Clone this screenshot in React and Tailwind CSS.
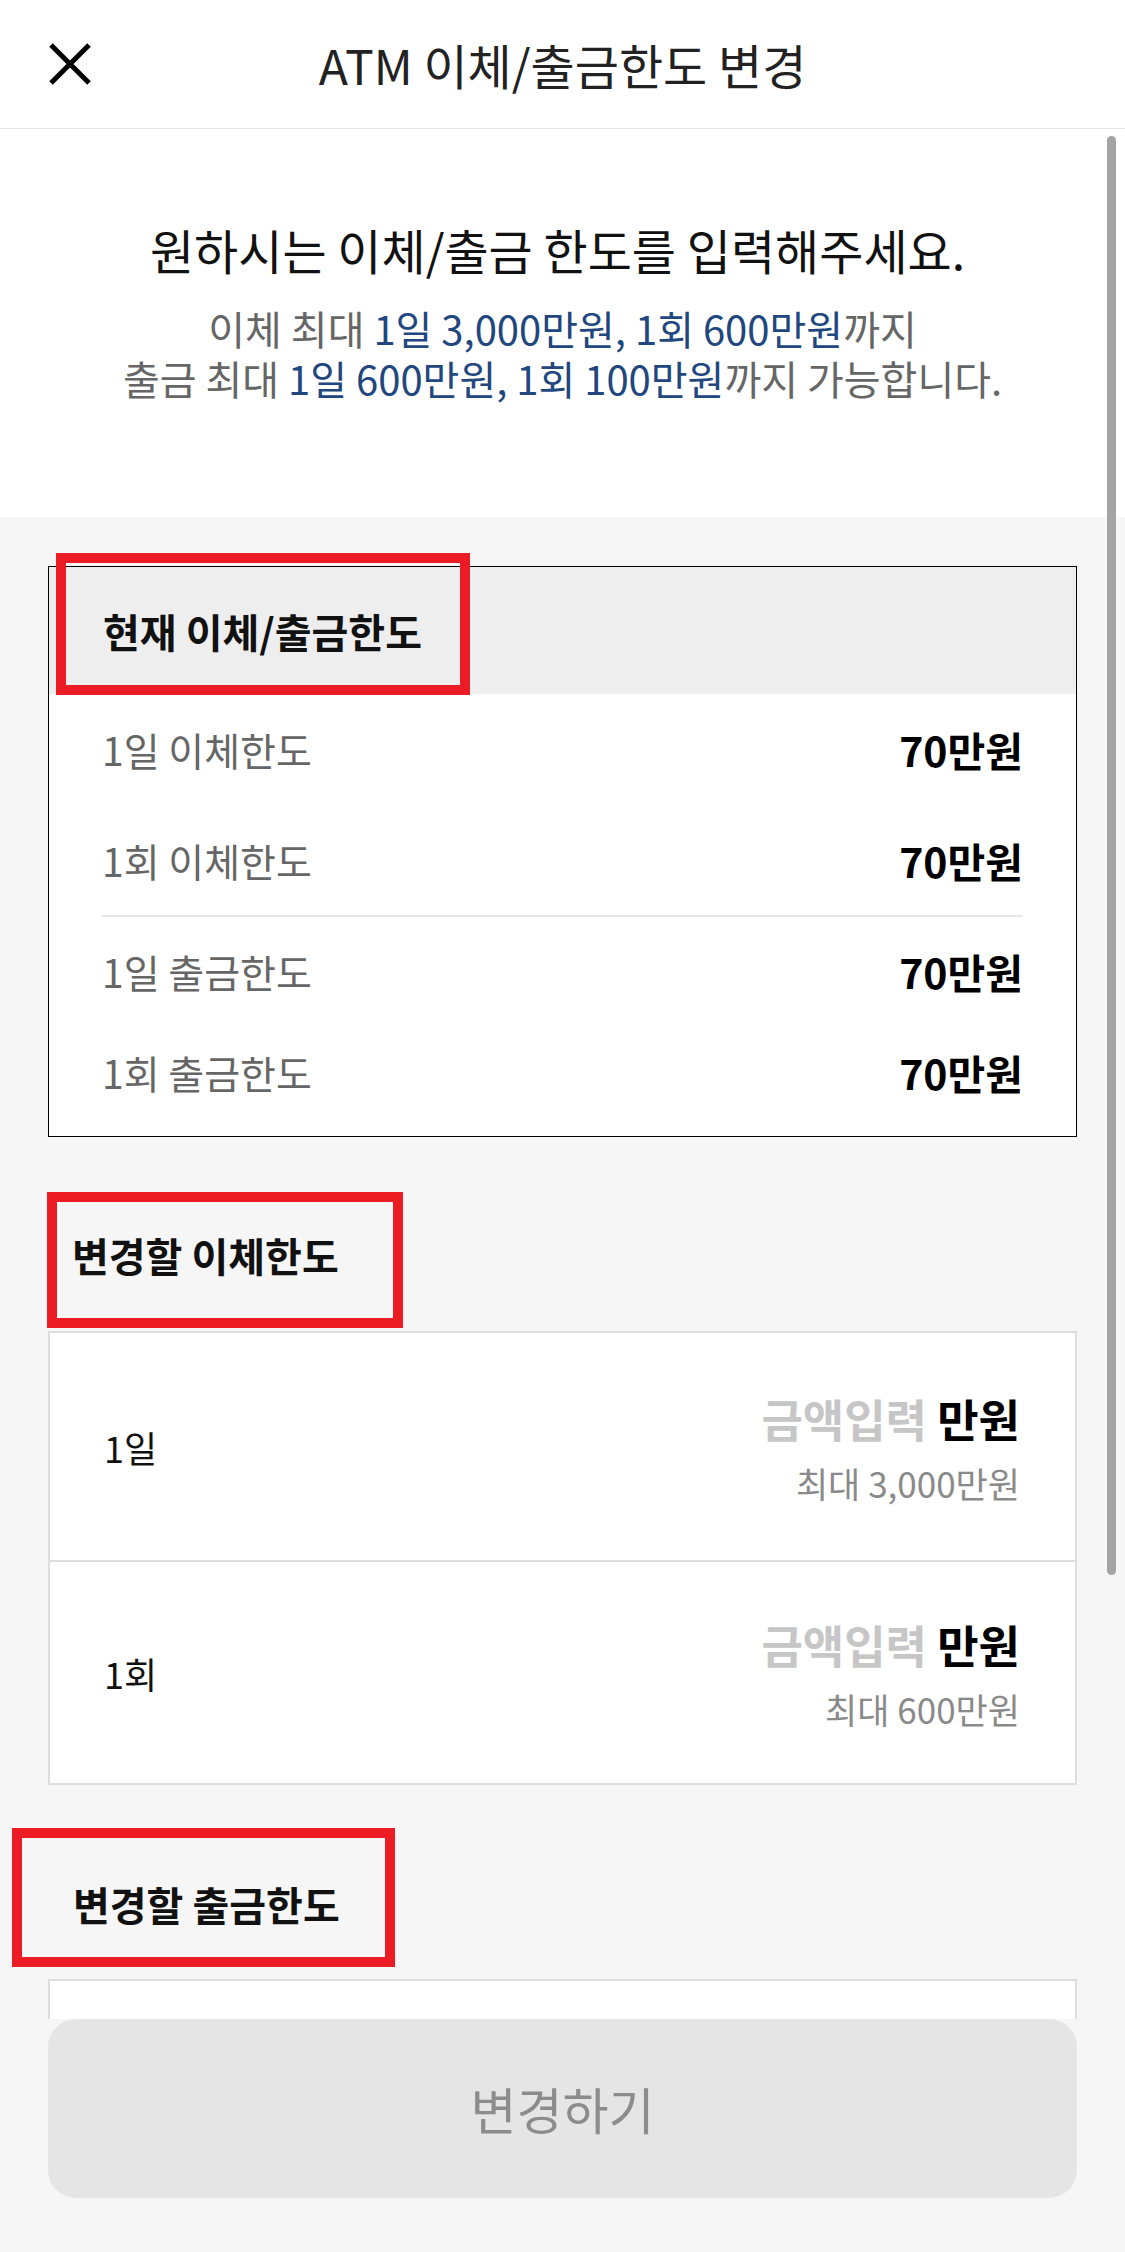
import React from "react";

const limits = [
  [
    { label: "1일 이체한도", value: "70만원" },
    { label: "1회 이체한도", value: "70만원" },
  ],
  [
    { label: "1일 출금한도", value: "70만원" },
    { label: "1회 출금한도", value: "70만원" },
  ],
];

function CloseIcon() {
  return (
    <svg width="44" height="42" viewBox="0 0 44 42" fill="none">
      <path d="M3 2 L41 40 M41 2 L3 40" stroke="#000" strokeWidth="5" />
    </svg>
  );
}

function Header() {
  return (
    <header className="h-[129px] shrink-0 bg-white border-b border-[#e4e4e4] grid grid-cols-[1fr_auto_1fr] items-center px-[48px]">
      <button className="w-[44px] h-[42px] flex items-center justify-center">
        <CloseIcon />
      </button>
      <h1 className="text-[48px] leading-[64px] text-[#222]">ATM 이체/출금한도 변경</h1>
      <div />
    </header>
  );
}

function Intro() {
  return (
    <section className="bg-white pt-[88px] pb-[114px] text-center">
      <h2 className="text-[48px] leading-[64px] text-[#111] pr-[10px]">
        원하시는 이체/출금 한도를 입력해주세요.
      </h2>
      <p className="mt-[22px] text-[40px] leading-[50px] text-[#666]">
        이체 최대 <span className="text-[#22477e]">1일 3,000만원, 1회 600만원</span>까지
        <br />
        출금 최대 <span className="text-[#22477e]">1일 600만원, 1회 100만원</span>까지 가능합니다.
      </p>
    </section>
  );
}

function LimitRow({ label, value }) {
  return (
    <div className="h-[56px] flex items-center justify-between">
      <span className="text-[39px] leading-[56px] text-[#666]">{label}</span>
      <span className="text-[41px] leading-[56px] font-bold text-black">{value}</span>
    </div>
  );
}

function CurrentLimits() {
  return (
    <div className="border border-black bg-white">
      <div className="relative h-[127px] bg-[#eeeeee] flex items-center pl-[54px]">
        <span className="text-[40px] leading-[56px] font-bold text-[#111]">현재 이체/출금한도</span>
        <div className="absolute left-[7px] top-[-14px] w-[414px] h-[142px] border-[10px] border-[#ec1c24]" />
      </div>
      <div className="px-[53px] pt-[27px] pb-[27px] flex flex-col gap-[55px]">
        {limits[0].map((r) => (
          <LimitRow key={r.label} {...r} />
        ))}
      </div>
      <div className="mx-[53px] h-[2px] bg-[#e8e8e8]" />
      <div className="px-[53px] pt-[26px] pb-[36px] flex flex-col gap-[45px]">
        {limits[1].map((r) => (
          <LimitRow key={r.label} {...r} />
        ))}
      </div>
    </div>
  );
}

function SectionTitle({ children, className, boxClass }) {
  return (
    <div className={"relative h-[56px] flex items-center " + className}>
      <span className="text-[40px] leading-[56px] font-bold text-[#111]">{children}</span>
      <div className={"absolute border-[10px] border-[#ec1c24] " + boxClass} />
    </div>
  );
}

function InputRow({ label, max, height }) {
  return (
    <div className={"flex items-center justify-between pl-[54px] pr-[55px] " + height}>
      <span className="text-[36px] leading-[52px] text-[#111]">{label}</span>
      <div className="flex flex-col items-end">
        <div className="leading-[60px] text-[45px] font-bold">
          <span className="text-[#c6c6c6]">금액입력</span>
          <span className="text-black"> 만원</span>
        </div>
        <div className="mt-[12px] leading-[44px] text-[35px] text-[#8a8a8a]">{max}</div>
      </div>
    </div>
  );
}

function InputCard({ className, rows }) {
  return (
    <div className={"border-2 border-[#dedede] bg-white " + className}>
      <InputRow label="1일" max={rows[0]} height="h-[227px]" />
      <div className="h-[2px] bg-[#dedede]" />
      <InputRow label="1회" max={rows[1]} height="h-[221px]" />
    </div>
  );
}

export default function App() {
  return (
    <div className="relative w-full h-[2252px] overflow-hidden bg-[#f6f6f6] flex flex-col font-['Noto_Sans_CJK_KR','Noto_Sans',sans-serif]">
      <Header />
      <main className="flex-1 min-h-0 overflow-hidden">
        <Intro />
        <section className="px-[48px] pt-[49px]">
          <CurrentLimits />
          <SectionTitle
            className="mt-[90px] pl-[24px]"
            boxClass="left-[-1px] top-[-35px] w-[356px] h-[136px]"
          >
            변경할 이체한도
          </SectionTitle>
          <InputCard className="mt-[48px]" rows={["최대 3,000만원", "최대 600만원"]} />
          <SectionTitle
            className="mt-[91px] pl-[25px]"
            boxClass="left-[-36px] top-[-48px] w-[383px] h-[139px]"
          >
            변경할 출금한도
          </SectionTitle>
          <InputCard className="mt-[47px]" rows={["최대 600만원", "최대 100만원"]} />
        </section>
      </main>
      <footer className="shrink-0 bg-[#f6f6f6] px-[48px] pb-[54px]">
        <button className="w-full h-[179px] rounded-[28px] bg-[#e5e5e5] text-[50px] text-[#8c8c8c]">
          변경하기
        </button>
      </footer>
      {/* scroll indicator */}
      <div className="absolute right-[9px] top-[136px] w-[9px] h-[1439px] rounded-full bg-[#a4a4a4]" />
    </div>
  );
}
